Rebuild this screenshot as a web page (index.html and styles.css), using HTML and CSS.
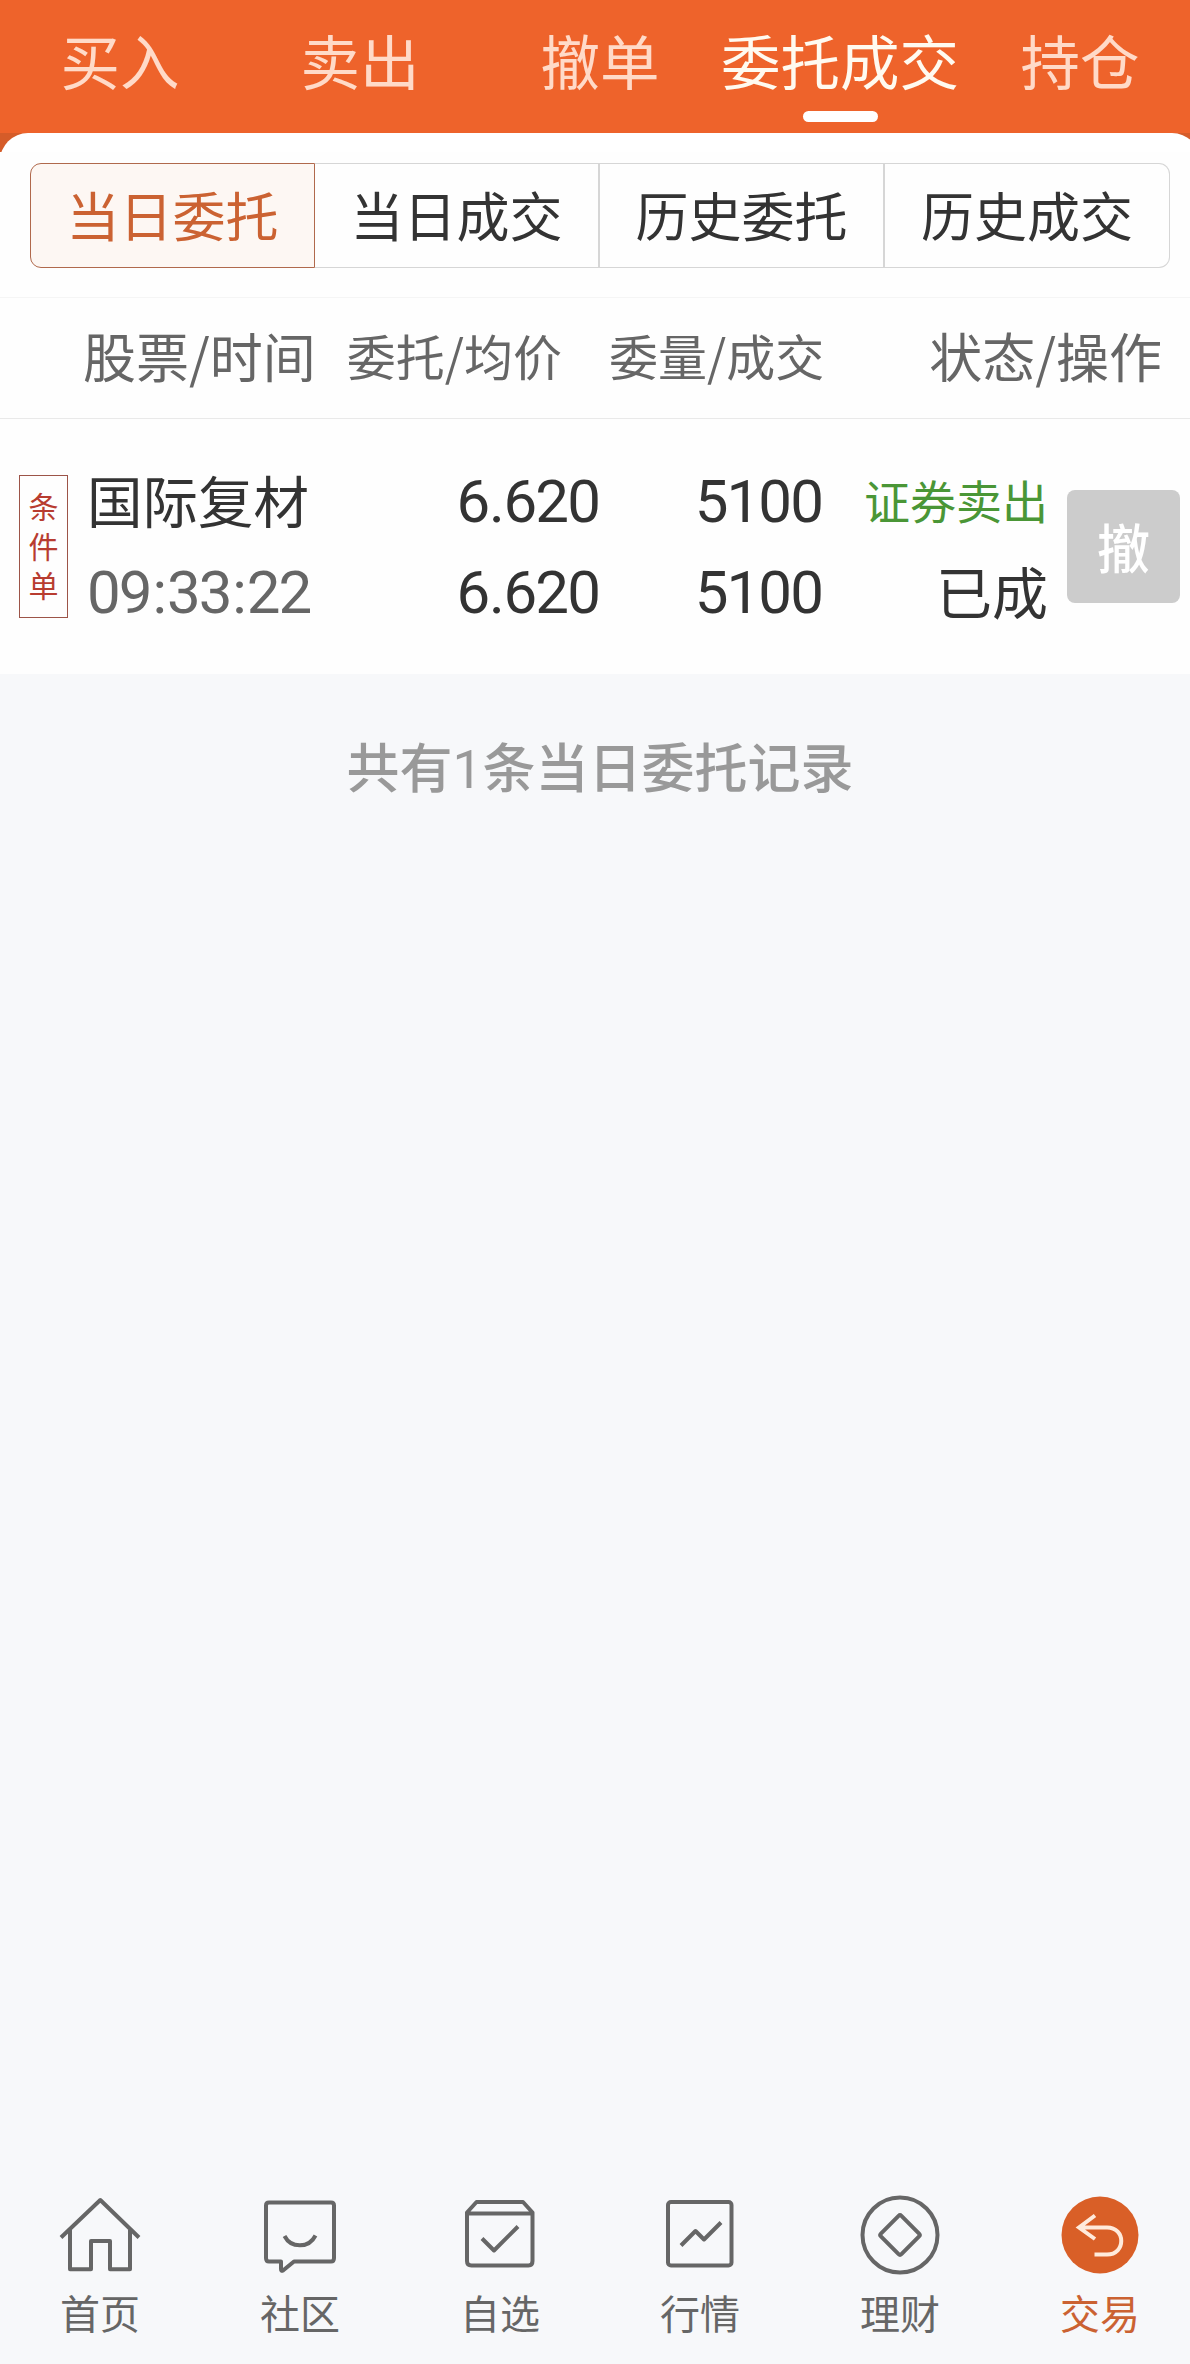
FILE: index.html
```html
<!DOCTYPE html>
<html lang="zh-CN">
<head>
<meta charset="utf-8">
<title>委托成交</title>
<link rel="stylesheet" href="styles.css">
</head>
<body>
<div class="app">
  <header class="tabs">
    <a class="tab">买入</a>
    <a class="tab">卖出</a>
    <a class="tab">撤单</a>
    <a class="tab tab-active">委托成交</a>
    <a class="tab">持仓</a>
  </header>
  <div class="panel-cap"><div class="panel-cap-round"></div></div>

  <main class="panel">
    <nav class="segments">
      <a class="segment segment-active">当日委托</a>
      <a class="segment">当日成交</a>
      <a class="segment">历史委托</a>
      <a class="segment">历史成交</a>
    </nav>

    <div class="columns">
      <span class="col-name">股票/时间</span>
      <span class="col-small">委托/均价</span>
      <span class="col-small">委量/成交</span>
      <span class="col-status">状态/操作</span>
    </div>

    <section class="order">
      <div class="badge"><span>条</span><span>件</span><span>单</span></div>
      <div class="cell cell-name">
        <span class="stock">国际复材</span>
        <span class="num time">09<i>:</i>33<i>:</i>22</span>
      </div>
      <div class="cell cell-price">
        <span class="num">6<b>.</b>620</span>
        <span class="num">6<b>.</b>620</span>
      </div>
      <div class="cell cell-volume">
        <span class="num">5100</span>
        <span class="num">5100</span>
      </div>
      <div class="cell cell-status">
        <span class="side">证券卖出</span>
        <span class="state">已成</span>
      </div>
      <button class="cancel">撤</button>
    </section>
  </main>

  <p class="summary">共有<span class="count">1</span>条当日委托记录</p>

  <footer class="nav">
    <a class="nav-item">
      <svg class="icon" viewBox="0 0 84 84"><path d="M3 43.500 42.300 6 81 43.500M12 36V75.300H33V47H52V75.300H72V36"/></svg>
      <span>首页</span>
    </a>
    <a class="nav-item">
      <svg class="icon" viewBox="0 0 84 84"><path d="M11 8.500H73Q76 8.500 76 11.500V64Q76 67.500 73 67.500H36L25 76.500Q23 77.500 23 75V67.500H11Q8 67.500 8 64V11.500Q8 8.500 11 8.500M26.500 42C33 54.500 51 54.500 57.500 41.500"/></svg>
      <span>社区</span>
    </a>
    <a class="nav-item">
      <svg class="icon" viewBox="0 0 84 84"><path d="M9 18.500 18.500 8H65L74.500 18.500V67Q74.500 71.500 70.500 71.500H13.500Q9 71.500 9 67ZM9 19.500H74.500M24 44.500 36 56.500 60 32.500"/></svg>
      <span>自选</span>
    </a>
    <a class="nav-item">
      <svg class="icon" viewBox="0 0 84 84"><rect x="10" y="8" width="63.500" height="63.500" rx="3"/><path d="M23 51.500 37.500 37 46 45.500 63 28.500"/></svg>
      <span>行情</span>
    </a>
    <a class="nav-item">
      <svg class="icon" viewBox="0 0 84 84"><circle cx="42" cy="41" r="37.500"/><rect x="27.500" y="26.500" width="29" height="29" rx="2" transform="rotate(45 42 41)"/></svg>
      <span>理财</span>
    </a>
    <a class="nav-item nav-active">
      <svg class="icon" viewBox="0 0 84 84"><circle class="disc" cx="42" cy="41" r="38.500"/><path class="arrow" d="M37 21.500 21 33.500 37 45M21 33.500H49C68 33.500 68 60.500 49 60.500H36.500"/></svg>
      <span>交易</span>
    </a>
  </footer>
</div>
</body>
</html>
```
FILE: styles.css
```css
* { box-sizing: border-box; }

body {
  margin: 0;
  overflow: hidden;
  background: #f7f8fa;
  font-family: "Noto Sans CJK SC", "Noto Sans", sans-serif;
  color: #333;
}

/* The layout is 1200px wide; the window trims its right edge. */
.app {
  display: flex;
  flex-direction: column;
  width: 1200px;
  height: 2364px;
}

.tabs {
  display: grid;
  grid-template-columns: repeat(5, 1fr);
  height: 133px;
  background: #ee632b;
}
.tab {
  display: flex;
  flex-direction: column;
  align-items: center;
  padding-top: 15px;
  font-size: 59.500px;
  line-height: 88px;
  color: #ffdac8;
}
.tab-active { color: #fffaf0; }
.tab-active::after {
  content: "";
  width: 75px;
  height: 11px;
  margin-top: 8px;
  border-radius: 6px;
  background: #fff;
}

.panel-cap {
  height: 19px;
  overflow: hidden;
  background: #d55c29;
}
.panel-cap-round {
  height: 60px;
  border-radius: 28px;
  background: #fff;
}

.panel {
  height: 522px;
  background: #fefefe;
}

.segments {
  display: grid;
  grid-template-columns: repeat(4, 1fr);
  height: 105px;
  margin: 11px 30px 0;
}
.segment {
  border: 1px solid #d6d6d6;
  border-left-width: 0;
  border-right-width: 2px;
  font-size: 53px;
  line-height: 101px;
  text-align: center;
}
.segment:last-child {
  border-right-width: 1px;
  border-radius: 0 11px 11px 0;
}
.segment-active {
  border: 1px solid #b0694c;
  border-radius: 11px 0 0 11px;
  background: #fdf7f3;
  color: #cb6232;
}

.columns {
  display: flex;
  align-items: center;
  height: 122px;
  margin-top: 29px;
  padding: 0 38px 0 83px;
  border-top: 1px solid #f5f5f5;
  border-bottom: 1px solid #e9e9e9;
  font-size: 53px;
  line-height: 114px;
  color: #666;
}
.columns > span { height: 120px; }
.col-small {
  font-size: 49px;
  margin-left: 31px;
}
.col-small + .col-small { margin-left: 47px; }
.col-status { margin-left: auto; }

.order {
  display: flex;
  align-items: center;
  height: 255px;
  padding-left: 19px;
}
.badge {
  display: flex;
  flex-direction: column;
  align-items: center;
  justify-content: center;
  width: 49px;
  height: 143px;
  padding-bottom: 2px;
  border: 1px solid #9c5448;
  font-size: 30px;
  line-height: 39.500px;
  color: #b83c30;
}
.cell {
  display: flex;
  flex-direction: column;
  line-height: 91px;
}
.cell > span { height: 91px; white-space: nowrap; }
.cell-name { width: 232px; margin-left: 19px; }
.cell-price { width: 280px; align-items: flex-end; }
.cell-volume { width: 223px; align-items: flex-end; }
.cell-status { width: 226px; align-items: flex-end; }
.stock { font-size: 55.500px; line-height: 86px; }
.cell > .num {
  font-family: Roboto, sans-serif;
  font-size: 60px;
  line-height: 92px;
  letter-spacing: -1.900px;
}
.num i { margin: 0 1.800px; font-style: normal; }
.num b { margin: 0 0.700px; font-weight: 400; }
.time { color: #666; }
.side { font-size: 46px; line-height: 86px; color: #4a9636; }
.state { font-size: 56px; line-height: 86px; }
.cancel {
  width: 113px;
  height: 113px;
  margin-left: 19px;
  padding: 0 0 2px;
  border: 0;
  border-radius: 8px;
  background: #ccc;
  color: #fff;
  font: 500 53px/110px "Noto Sans CJK SC", sans-serif;
}

.summary {
  margin: 52px 0 0;
  font-size: 53px;
  font-weight: 500;
  line-height: 78px;
  text-align: center;
  color: #999;
}
.count { font-family: Roboto, sans-serif; font-weight: 400; }

.nav {
  display: grid;
  grid-template-columns: repeat(6, 1fr);
  height: 170px;
  margin-top: auto;
}
.nav-item {
  display: flex;
  flex-direction: column;
  align-items: center;
  font-size: 40px;
  line-height: 58px;
  color: #666;
}
.icon {
  width: 84px;
  height: 84px;
  margin-bottom: 5px;
  fill: none;
  stroke: #666;
  stroke-width: 4;
  stroke-linejoin: round;
}
.nav-active { color: #cb6232; }
.icon .disc { fill: #d95f27; stroke: none; }
.icon .arrow { stroke: #ffeadb; stroke-linejoin: miter; }
```
